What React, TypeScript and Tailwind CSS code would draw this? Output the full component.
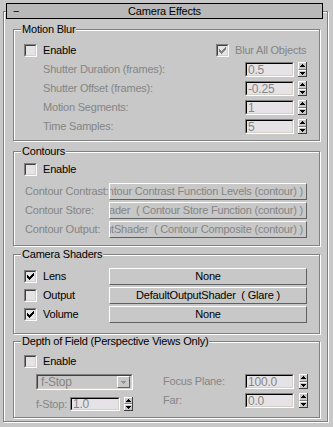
import React from 'react';

// 3ds Max style "Camera Effects" rollout

const Tri = ({ up, color = '#000' }: { up: boolean; color?: string }) => (
  <svg width="5" height="3" viewBox="0 0 5 3" className="block" shapeRendering="crispEdges">
    <path
      d={up ? 'M2 0h1v1h-1z M1 1h3v1h-3z M0 2h5v1h-5z' : 'M0 0h5v1h-5z M1 1h3v1h-3z M2 2h1v1h-1z'}
      fill={color}
    />
  </svg>
);

const CheckMark = ({ color }: { color: string }) => (
  <svg width="7" height="7" viewBox="0 0 7 7" className="block" shapeRendering="crispEdges">
    <path
      d="M0 2h1v3h-1z M1 3h1v3h-1z M2 4h1v3h-1z M3 3h1v3h-1z M4 2h1v3h-1z M5 1h1v3h-1z M6 0h1v3h-1z"
      fill={color}
    />
  </svg>
);

const CheckBox = ({ checked = false, dim = false }: { checked?: boolean; dim?: boolean }) => (
  <div className="w-[13px] h-[13px] shrink-0 border border-t-[#808080] border-l-[#808080] border-b-white border-r-white">
    <div className="w-full h-full border border-t-[#404040] border-l-[#404040] border-b-[#d4d0c8] border-r-[#d4d0c8] bg-[#e6e3e6] flex items-center justify-center">
      {checked && <CheckMark color={dim ? '#808080' : '#000'} />}
    </div>
  </div>
);

const Spinner = ({ h = 'h-[15px]' }: { h?: string }) => (
  <div className={`w-[9px] ${h} shrink-0 flex flex-col border-r border-b border-r-[#404040] border-b-[#404040]`}>
    <div className="flex-1 flex items-center justify-center bg-[#c8c8c8] border-t border-l border-t-white border-l-white border-b border-b-[#808080]">
      <Tri up />
    </div>
    <div className="flex-1 flex items-center justify-center bg-[#c8c8c8] border-l border-l-white border-t border-t-white">
      <Tri up={false} />
    </div>
  </div>
);

const Field = ({ value, w = 'w-[49px]', h = 'h-[15px]' }: { value: string; w?: string; h?: string }) => (
  <div className={`${w} ${h} shrink-0 border border-t-[#808080] border-l-[#808080] border-b-white border-r-white`}>
    <div className="w-full h-full border border-t-[#000] border-l-[#000] border-b-[#d4d0c8] border-r-[#d4d0c8] bg-[#e6e3e6] text-[#858585] text-[12px] pl-[1px] flex items-center leading-none">
      {value}
    </div>
  </div>
);

const Button = ({ children, dim = false, right = false }: { children: React.ReactNode; dim?: boolean; right?: boolean }) => (
  <div
    className={`w-[198px] h-[17px] shrink-0 overflow-hidden whitespace-nowrap flex items-center border border-t-white border-l-white border-b-[#606060] border-r-[#606060] bg-[#c8c8c8] ${
      right ? 'justify-end pr-[3px]' : 'justify-center'
    } ${dim ? 'text-[#858585]' : 'text-black'}`}
  >
    {children}
  </div>
);

const Group = ({ title, className, children }: { title: string; className: string; children: React.ReactNode }) => (
  <div
    className={`ml-[9px] w-[307px] border border-[#808080] shadow-[inset_1px_1px_0_#fff,1px_1px_0_#fff] flex flex-col ${className}`}
  >
    <div className="-mt-[7px] ml-[7px] px-[1px] w-fit h-[13px] leading-[13px] bg-[#c8c8c8] text-black">{title}</div>
    {children}
  </div>
);

const SpinRow = ({ label, value }: { label: string; value: string }) => (
  <div className="flex items-center pl-[29px] pr-[12px] h-[15px]">
    <span className="flex-1 text-[#858585] whitespace-nowrap">{label}</span>
    <Field value={value} />
    <div className="w-[4px]" />
    <Spinner />
  </div>
);

export default function App() {
  return (
    <div className="w-[333px] h-[427px] bg-[#c8c8c8] pt-[11px] pl-[3px] overflow-hidden text-[11px] tracking-[-0.2px] font-['Liberation_Sans',Arial,sans-serif] select-none">
      <div className="w-[325px] h-[411px] border border-[#808080] shadow-[inset_1px_1px_0_#fff,1px_1px_0_#fff] flex flex-col">
        {/* rollout title */}
        <div className="-mt-[9px] ml-[2px] w-[317px] h-[16px] shrink-0 border border-black bg-[#b9b9b9] grid grid-cols-[1fr_auto_1fr] items-center leading-none">
          <span className="pl-[6px]">−</span>
          <span>Camera Effects</span>
          <span />
        </div>

        <Group title="Motion Blur" className="mt-[10px] h-[112px] shrink-0">
          <div className="mt-[8px] flex items-center h-[13px] pl-[10px]">
            <div className="w-[192px] flex items-center gap-[6px]">
              <CheckBox />
              <span>Enable</span>
            </div>
            <div className="flex items-center gap-[6px]">
              <CheckBox checked dim />
              <span className="text-[#858585]">Blur All Objects</span>
            </div>
          </div>
          <div className="mt-[5px] flex flex-col gap-[4px]">
            <SpinRow label="Shutter Duration (frames):" value="0.5" />
            <SpinRow label="Shutter Offset (frames):" value="-0.25" />
            <SpinRow label="Motion Segments:" value="1" />
            <SpinRow label="Time Samples:" value="5" />
          </div>
        </Group>

        <Group title="Contours" className="mt-[10px] h-[95px] shrink-0">
          <div className="mt-[5px] flex items-center h-[13px] pl-[10px] gap-[6px]">
            <CheckBox />
            <span>Enable</span>
          </div>
          <div className="mt-[7px] flex flex-col gap-[2px]">
            {[
              ['Contour Contrast:', 'ntour Contrast Function Levels (contour) )'],
              ['Contour Store:', 'ader  ( Contour Store Function (contour) )'],
              ['Contour Output:', 'utShader  ( Contour Composite (contour) )'],
            ].map(([label, value]) => (
              <div key={label} className="flex items-center pl-[11px]">
                <span className="w-[84px] shrink-0 whitespace-nowrap text-[#858585]">{label}</span>
                <Button dim right>
                  <span className="whitespace-pre">{value}</span>
                </Button>
              </div>
            ))}
          </div>
        </Group>

        <Group title="Camera Shaders" className="mt-[8px] h-[80px] shrink-0">
          <div className="mt-[7px] flex flex-col gap-[2px]">
            {[
              ['Lens', true, 'None'],
              ['Output', false, 'DefaultOutputShader  ( Glare )'],
              ['Volume', true, 'None'],
            ].map(([label, checked, value]) => (
              <div key={label as string} className="flex items-center pl-[10px]">
                <div className="w-[85px] flex items-center gap-[6px]">
                  <CheckBox checked={checked as boolean} />
                  <span>{label as string}</span>
                </div>
                <Button>
                  <span className="whitespace-pre">{value as string}</span>
                </Button>
              </div>
            ))}
          </div>
        </Group>

        <Group title="Depth of Field (Perspective Views Only)" className="mt-[7px] h-[77px] shrink-0">
          <div className="mt-[7px] flex items-center h-[13px] pl-[10px] gap-[6px]">
            <CheckBox />
            <span>Enable</span>
          </div>
          <div className="mt-[6px] flex">
            <div className="w-[149px] flex flex-col">
              <div className="ml-[22px] w-[97px] h-[16px] border border-t-[#808080] border-l-[#808080] border-b-white border-r-white">
                <div className="w-full h-full border border-t-[#404040] border-l-[#404040] border-b-[#d4d0c8] border-r-[#d4d0c8] flex items-center">
                  <span className="flex-1 pl-[3px] text-[#858585] text-[12px]">f-Stop</span>
                  <div className="w-[13px] h-[12px] mr-[1px] flex items-center justify-center border border-t-white border-l-white border-b-[#606060] border-r-[#606060] bg-[#c8c8c8]">
                    <Tri up={false} color="#909090" />
                  </div>
                </div>
              </div>
              <div className="mt-[6px] ml-[22px] flex items-center">
                <span className="w-[34px] text-[#858585]">f-Stop:</span>
                <Field value="1.0" w="w-[50px]" h="h-[14px]" />
                <div className="w-[4px]" />
                <Spinner h="h-[14px]" />
              </div>
            </div>
            <div className="flex flex-col gap-[4px]">
              {[
                ['Focus Plane:', '100.0'],
                ['Far:', '0.0'],
              ].map(([label, value]) => (
                <div key={label} className="flex items-center h-[15px]">
                  <span className="w-[82px] text-[#858585]">{label}</span>
                  <Field value={value} />
                  <div className="w-[5px]" />
                  <Spinner />
                </div>
              ))}
            </div>
          </div>
        </Group>
      </div>
    </div>
  );
}
